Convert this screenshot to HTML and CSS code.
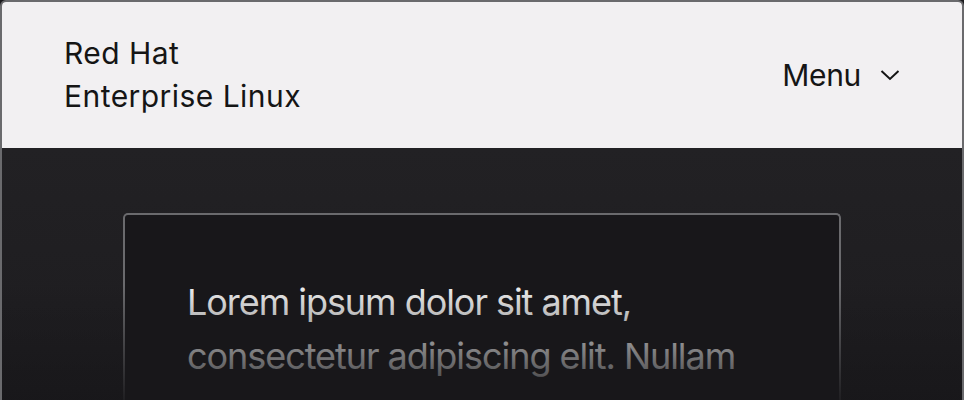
FILE: index.html
```html
<!DOCTYPE html>
<html lang="en">
<head>
<meta charset="utf-8">
<title>Red Hat Enterprise Linux</title>
<link rel="stylesheet" href="styles.css">
</head>
<body>
<div class="frame">
  <header class="masthead">
    <div class="brand">Red Hat<br>Enterprise Linux</div>
    <button class="menu-toggle" type="button">
      <span class="menu-label">Menu</span>
      <svg class="chevron" width="20" height="12" viewBox="0 0 20 12" aria-hidden="true">
        <path d="M1.5 2 L10 10 L18.5 2" fill="none" stroke="#151515" stroke-width="2"/>
      </svg>
    </button>
  </header>
  <main class="stage">
    <section class="card">
      <p class="card-text">Lorem ipsum dolor sit amet,<br>consectetur adipiscing elit. Nullam</p>
    </section>
  </main>
</div>
</body>
</html>
```
FILE: styles.css
```css
* { box-sizing: border-box; }
html, body {
  margin: 0;
  padding: 0;
  width: 964px;
  height: 400px;
  overflow: hidden;
  background: #1a191c;
}
.frame {
  width: 964px;
  height: 400px;
  border: 2px solid #6a6a6d;
  border-bottom: none;
  border-radius: 6px 6px 0 0;
  overflow: hidden;
  display: flex;
  flex-direction: column;
  font-family: Inter, "Noto Sans", sans-serif;
}
.masthead {
  height: 146px;
  flex: none;
  background: #f2f0f2;
  display: flex;
  align-items: center;
  justify-content: space-between;
  padding: 0 62px;
  color: #151515;
}
.brand {
  font-size: 30px;
  line-height: 43px;
  letter-spacing: 0.45px;
}
.menu-toggle {
  display: flex;
  align-items: center;
  gap: 19px;
  background: none;
  border: none;
  padding: 0;
  color: #151515;
  font: inherit;
}
.menu-label {
  font-size: 30px;
  line-height: 43px;
  letter-spacing: -0.3px;
}
.chevron { display: block; }
.stage {
  flex: 1;
  min-height: 0;
  overflow: hidden;
  position: relative;
  background: linear-gradient(#222124, #1d1c1f);
  padding-top: 65px;
  display: flex;
  justify-content: center;
  align-items: flex-start;
}
.stage::after {
  content: "";
  position: absolute;
  left: 0;
  right: 0;
  bottom: 0;
  height: 115px;
  background: linear-gradient(rgba(24,23,26,0), rgba(24,23,26,0.9));
  pointer-events: none;
}
.card {
  width: 718px;
  height: 260px;
  flex: none;
  background: #18171a;
  border: 2px solid #6a6a6d;
  border-bottom: none;
  border-radius: 5px 5px 0 0;
  padding: 60px 62px 0;
}
.card-text {
  margin: 0;
  color: #f0f0f0;
  font-size: 36px;
  line-height: 54px;
  letter-spacing: -1.05px;
}
```
